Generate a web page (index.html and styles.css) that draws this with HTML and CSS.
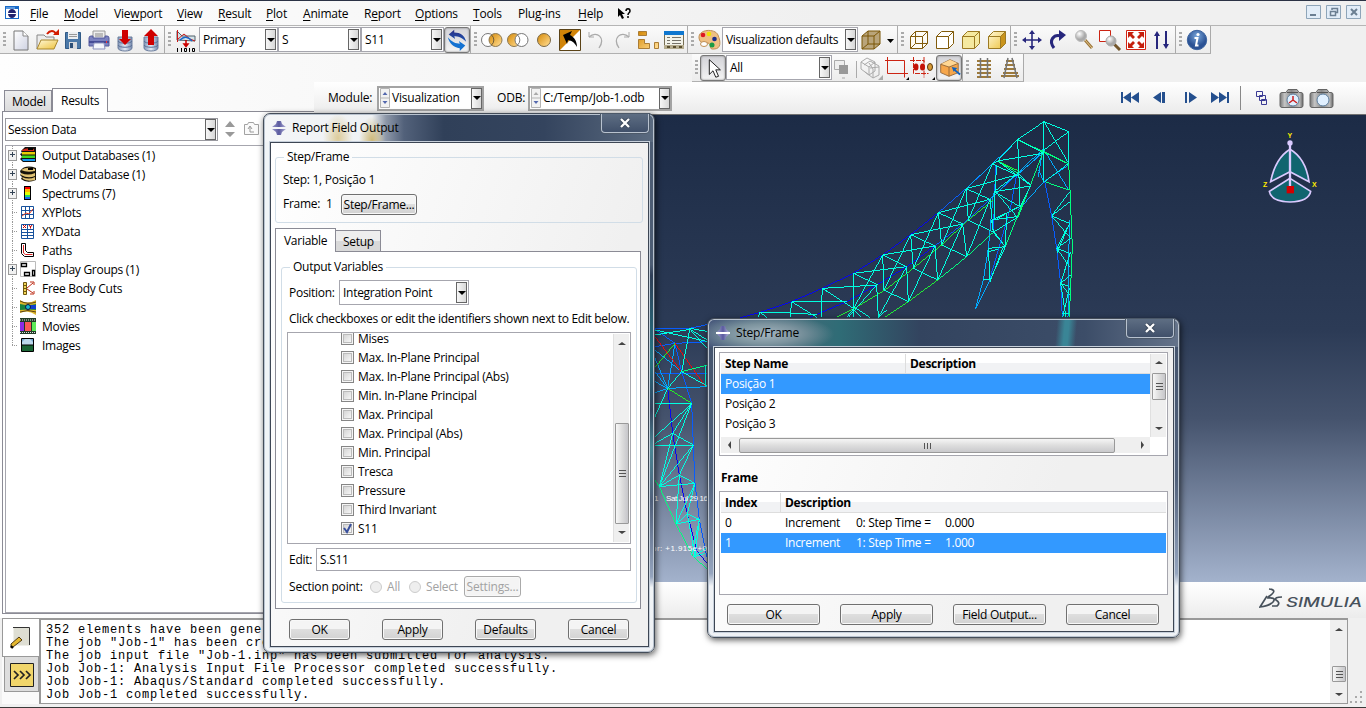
FILE: index.html
```html
<!DOCTYPE html>
<html lang="en">
<head>
<meta charset="utf-8">
<title>Report Field Output</title>
<link rel="stylesheet" href="styles.css">
</head>
<body>
<svg class="defs" width="0" height="0">
  <defs>
    <linearGradient id="gold" x1="0" y1="0" x2="1" y2="1"><stop offset="0" stop-color="#d48806"/><stop offset=".9" stop-color="#ffd98a"/></linearGradient>
    <linearGradient id="steel" x1="0" x2="1"><stop offset="0" stop-color="#8296b8"/><stop offset=".5" stop-color="#e4ebf5"/><stop offset="1" stop-color="#7388ad"/></linearGradient>
    <linearGradient id="pale" x1="0" y1="0" x2="1" y2="1"><stop offset="0" stop-color="#fff8d8"/><stop offset="1" stop-color="#edc23c"/></linearGradient>
    <linearGradient id="page" x1="0" y1="0" x2="1" y2="1"><stop offset="0" stop-color="#fff"/><stop offset="1" stop-color="#cfd2e2"/></linearGradient>
    <linearGradient id="sky" x1="0" y1="0" x2="0" y2="1"><stop offset="0" stop-color="#2c2f86"/><stop offset="1" stop-color="#1d55b0"/></linearGradient>
    <linearGradient id="abq" x1="0" x2="1"><stop offset="0" stop-color="#9a9acb"/><stop offset=".5" stop-color="#5a5a9f"/><stop offset="1" stop-color="#b0b0d8"/></linearGradient>
    <linearGradient id="cam" x1="0" x2="1"><stop offset="0" stop-color="#777"/><stop offset=".2" stop-color="#c4c4c4"/><stop offset=".5" stop-color="#8b8b8b"/><stop offset=".85" stop-color="#bbb"/><stop offset="1" stop-color="#666"/></linearGradient>
    <radialGradient id="lens" cx=".35" cy=".3"><stop offset="0" stop-color="#fff"/><stop offset="1" stop-color="#a9a9a9"/></radialGradient>
    <radialGradient id="info" cx=".5" cy=".3"><stop offset="0" stop-color="#79a6da"/><stop offset="1" stop-color="#2b5294"/></radialGradient>
    <g id="camera"><path d="M1 5.500q0-2 2-2h4l2-3h9l2 3h2q2 0 2 2v11q0 2-2 2H3q-2 0-2-2z" fill="url(#cam)" stroke="#666"/><path d="M8 3.500h11" stroke="#555"/><circle cx="14" cy="11" r="6" fill="#e1f0ff" stroke="#5d7f9f"/></g>
  </defs>
</svg>
<div class="app">
  <nav class="menubar">
    <svg class="appicon" width="14" height="13"><path d="M0 0h14v13H0z" fill="#1769c8"/><path d="M1 3h12v9H1z" fill="#fff"/><path d="M1 2h9" stroke="#9ec8f4"/><path d="M3 7c0-2 2-4 4-4s4 2 4 4z M3 8c0 2 2 4 4 4s4-2 4-4z" fill="#23236f"/></svg>
    <span class="m m1"><u>F</u>ile</span><span class="m m2"><u>M</u>odel</span><span class="m m3">Vie<u>w</u>port</span><span class="m m4"><u>V</u>iew</span><span class="m m5"><u>R</u>esult</span><span class="m m6"><u>P</u>lot</span><span class="m m7"><u>A</u>nimate</span><span class="m m8">R<u>e</u>port</span><span class="m m9"><u>O</u>ptions</span><span class="m m10"><u>T</u>ools</span><span class="m m11">Plu<u>g</u>-ins</span><span class="m m12"><u>H</u>elp</span>
    <svg class="m13" width="14" height="14"><path d="M0 1v9l2-2 2 4 2-1-2-4h3z" fill="#000"/><path d="M8 4c0-3 4-3 4 0 0 2-2 1.500-2 4M9 10h2" stroke="#000" stroke-width="1.500" fill="none"/></svg>
    <div class="winbtns">
      <svg width="15" height="14"><path d="M.5.500h14v13H.5z" fill="#e2edf8" stroke="#8ea5b9"/><path d="M4 10h6" stroke="#6b7f92" stroke-width="2"/></svg>
      <svg width="15" height="14"><path d="M.5.500h14v13H.5z" fill="#e2edf8" stroke="#8ea5b9"/><path d="M6 5V3.500h5.500v4H10M4.500 6.500h5v4h-5z" fill="none" stroke="#6b7f92" stroke-width="1.500"/></svg>
      <svg width="15" height="14"><path d="M.5.500h14v13H.5z" fill="#e2edf8" stroke="#8ea5b9"/><path d="M5 4l6 6M11 4l-6 6" stroke="#6b7f92" stroke-width="2"/></svg>
    </div>
  </nav>

  <div class="toolrow">
    <div class="tools">
      <i class="grip"></i>
      <svg class="ic" viewBox="0 0 26 26"><path d="M6 4h9l5 5v14H6z" fill="url(#page)" stroke="#777"/><path d="M15 4v5h5" fill="#fff" stroke="#888"/></svg>
      <svg class="ic" viewBox="0 0 26 26"><path d="M3 22V8h7l2 2h8v4" fill="#ececec" stroke="#888"/><path d="M3 22l4-9h17l-4 9z" fill="url(#pale)" stroke="#a8862c"/><path d="M13 7c3-4 7-4 9 0" stroke="#d31b00" stroke-width="2" fill="none"/><path d="M19 8h6V2z" fill="#d31b00"/></svg>
      <svg class="ic" viewBox="0 0 26 26"><path d="M5.500 5.500h15v16h-15z" fill="#4a78a8" stroke="#315a86"/><path d="M8 5h10v7H8z" fill="#eceff2"/><path d="M9 7.500h8M9 9.500h8" stroke="#999"/><path d="M9 15h8v7H9z" fill="#d6d9dd"/><path d="M10 16h3v5h-3z" fill="#2c4f77"/></svg>
      <svg class="ic" viewBox="0 0 26 26"><path d="M7 4h12v8H7z" fill="#eee" stroke="#999"/><path d="M9 7h8M9 9h8" stroke="#888"/><path d="M3 11q0-2 2-2h2v2h12V9h2q2 0 2 2v8H3z" fill="#7b82c0" stroke="#555b9c"/><path d="M3 14h20v2H3z" fill="#454c96"/><path d="M8 16h10l1 6H7z" fill="#f4f6fb" stroke="#8b91bd"/><path d="M20 15h1" stroke="#f33" stroke-width="2"/></svg>
      <svg class="ic" viewBox="0 0 26 26"><path d="M6 10v11c0 4 14 4 14 0V10z" fill="url(#steel)" stroke="#6c7e9e"/><path d="M6 14c1 3 13 3 14 0M6 18c1 3 13 3 14 0" stroke="#5c7096" fill="none"/><path d="M10 3h6v9h3l-6 6-6-6h3z" fill="#cf0000"/></svg>
      <svg class="ic" viewBox="0 0 26 26"><path d="M6 10v11c0 4 14 4 14 0V10z" fill="url(#steel)" stroke="#6c7e9e"/><path d="M6 14c1 3 13 3 14 0M6 18c1 3 13 3 14 0" stroke="#5c7096" fill="none"/><path d="M10 18h6V9h4l-7-7-7 7h4z" fill="#cf0000"/></svg>
    </div>
    <div class="tools">
      <i class="grip"></i>
      <svg class="ic" viewBox="0 0 26 26"><path d="M4 4l5 5h13v5L4 13z" fill="#d3e3e9" stroke="#52616b"/><path d="M4.500 3v12M5 12l6-5 6 5 5 2" stroke="#cc1717" fill="none"/><path d="M7 13q6-6 12 1" stroke="#1767ca" stroke-width="1.500" fill="none"/><path d="M13 13v5M11 17l2 2.500 2-2.500z" stroke="#c00" stroke-width="1.500" fill="#c00"/><path d="M4.500 21v4M8.500 21v4M16.500 21v4M11.500 21.500h2v3h-2zM19.500 21.500h2v3h-2z" stroke="#000" fill="none"/></svg>
      <div class="combo w79"><span>Primary</span><b></b></div>
      <div class="combo w83"><span>S</span><b></b></div>
      <div class="combo w83"><span>S11</span><b></b></div>
      <svg class="ic on" viewBox="0 0 26 26"><path d="M3 10c4 5 9 7 13 7l-1-3 7 5-6 6v-3C9 21 5 17 3 10z" fill="#1472d2"/><path d="M23 15C18 10 14 9 10 9l1 3-7-5 6-5v3c7 0 11 3 13 10z" fill="url(#sky)"/></svg>
    </div>
    <div class="tools">
      <i class="grip"></i>
      <svg class="ic" viewBox="0 0 26 26"><circle cx="9" cy="13" r="6.500" fill="#fff" stroke="#777"/><circle cx="16.500" cy="13" r="6.500" fill="url(#gold)" stroke="#8d7850"/><path d="M12.500 8a6.500 6.500 0 0 1 0 10" stroke="#6d5a36" fill="none"/></svg>
      <svg class="ic" viewBox="0 0 26 26"><circle cx="9" cy="13" r="6.500" fill="url(#gold)" stroke="#8d7850"/><circle cx="16.500" cy="13" r="6.500" fill="#fff" stroke="#777"/><path d="M12.500 8a6.500 6.500 0 0 1 0 10" stroke="#777" fill="none"/></svg>
      <svg class="ic" viewBox="0 0 26 26"><circle cx="13" cy="13" r="6.500" fill="url(#gold)" stroke="#7a6846"/></svg>
      <svg class="ic" viewBox="0 0 26 26"><path d="M2.500 2.500h21v21h-21z" fill="#fff" stroke="#5b4317"/><path d="M3 23V3h20z" fill="#d18408"/><path d="M6 8l9-4-2 4c4 2 7 6 7 12-3-5-5-6-9-7l-1 4z" fill="#000"/></svg>
      <svg class="ic" viewBox="0 0 26 26"><path d="M6 10c8-7 17 1 10 11" stroke="#aaa" stroke-width="1.300" fill="none"/><path d="M6 5v5h5" stroke="#aaa" fill="none"/></svg>
      <svg class="ic" viewBox="0 0 26 26"><path d="M20 10C12 3 3 11 10 21" stroke="#aaa" stroke-width="1.300" fill="none"/><path d="M20 5v5h-5" stroke="#aaa" fill="none"/></svg>
      <svg class="ic" viewBox="0 0 26 26"><path d="M3.500 4.500h8v4h-8zM3.500 12.500h6v4h5v5h-11zM19.500 15.500h4v6h-4z" fill="url(#gold)" stroke="#ab7d35"/></svg>
      <svg class="ic" viewBox="0 0 26 26"><path d="M3.500 4.500h19v17h-19z" fill="#f3f3ea" stroke="#776f55"/><path d="M3 4h20v4H3z" fill="#0f77cf"/><path d="M3 18h20v4H3z" fill="#b5ac8e"/><path d="M6 10.500h3M11 10.500h9M6 13.500h3M11 13.500h9M6 16.500h3M11 16.500h9" stroke="#77746a"/><path d="M6 20h3M12 20h3M18 20h3" stroke="#5b5030" stroke-width="2"/></svg>
    </div>
    <div class="tools">
      <i class="grip"></i>
      <svg class="ic" viewBox="0 0 26 26"><path d="M3 11C2 2 19 1 22 8s3 14-4 14c-6 1-2-5-6-6-3-1-8 2-9-5z" fill="#efbf83" stroke="#c08f55"/><circle cx="7" cy="8" r="2.300" fill="#df1720"/><circle cx="13" cy="7" r="2.300" fill="#efe300"/><circle cx="18.500" cy="12" r="2.300" fill="#1b2d8b"/><circle cx="16" cy="18" r="2.500" fill="#1a9b45"/><ellipse cx="8" cy="17" rx="3.500" ry="2.500" fill="#fff" stroke="#c08f55"/></svg>
      <div class="combo w136"><span>Visualization defaults</span><b></b></div>
      <svg class="ic" viewBox="0 0 26 26"><path d="M4 9l6-5h12v13l-6 5H4z" fill="#b9a47a" stroke="#7b5607"/><path d="M4 9h12v13M16 9l6-5M10 4v13h12M10 17l-6 5" stroke="#7b5607" fill="none"/></svg>
      <svg width="13" height="26"><path d="M3 12h7l-3.500 4z"/></svg>
    </div>
    <div class="tools">
      <i class="grip"></i>
      <svg class="ic" viewBox="0 0 26 26"><path d="M4.500 9.500l5-5h12v12l-5 5h-12zM4.500 9.500h12v12M16.500 9.500l5-5M9.500 4.500v12h12M9.500 16.500l-5 5" stroke="#825c0c" fill="#fffdf5"/></svg>
      <svg class="ic" viewBox="0 0 26 26"><path d="M4.500 9.500l5-5h12v12l-5 5h-12zM4.500 9.500h12v12M16.500 9.500l5-5" stroke="#825c0c" fill="#fff"/></svg>
      <svg class="ic" viewBox="0 0 26 26"><path d="M4.500 9.500l5-5h12v12l-5 5h-12zM4.500 9.500h12v12M16.500 9.500l5-5" stroke="#9c7a23" fill="#f5e9a0"/></svg>
      <svg class="ic" viewBox="0 0 26 26"><path d="M4.500 9.500l5-5h12v12l-5 5h-12z" fill="url(#pale)"/><path d="M16.500 9.500l5-5v12l-5 5z" fill="#c9941c"/><path d="M4.500 9.500l5-5h12v12l-5 5h-12zM4.500 9.500h12v12M16.500 9.500l5-5" stroke="#9c7a23" fill="none"/></svg>
    </div>
    <div class="tools">
      <i class="grip"></i>
      <svg class="ic" viewBox="0 0 26 26"><path d="M13 5v16M5 13h16" stroke="#27277d" stroke-width="1.600"/><path d="M10 7l3-4 3 4zM10 19l3 4 3-4zM7 10l-4 3 4 3zM19 10l4 3-4 3z" fill="#27277d"/></svg>
      <svg class="ic" viewBox="0 0 26 26"><path d="M9 21C3 13 9 7 16 9" stroke="#27277d" stroke-width="3" fill="none"/><path d="M14 3l7 5-7 6z" fill="#27277d"/></svg>
      <svg class="ic" viewBox="0 0 26 26"><path d="M14 13l7 8" stroke="#9a7438" stroke-width="3"/><path d="M14 13l7 8" stroke="#e5ca90"/><circle cx="10" cy="9" r="5.500" fill="url(#lens)" stroke="#bbb"/></svg>
      <svg class="ic" viewBox="0 0 26 26"><path d="M2.500 3.500h11v11h-11z" fill="#fff" stroke="#cc2413"/><path d="M17 17l6 6" stroke="#73562b" stroke-width="3"/><circle cx="14" cy="14" r="5" fill="url(#lens)" stroke="#aaa"/></svg>
      <svg class="ic" viewBox="0 0 26 26"><path d="M3.500 3.500h19v19h-19z" fill="#fff" stroke="#d32414"/><path d="M5 5h6L9 7l3 3-2 2-3-3-2 2zM21 5v6l-2-2-3 3-2-2 3-3-2-2zM5 21v-6l2 2 3-3 2 2-3 3 2 2zM21 21h-6l2-2-3-3 2-2 3 3 2-2z" fill="#c5200d"/></svg>
      <svg class="ic" viewBox="0 0 26 26"><path d="M8 8v14M17 4v14" stroke="#27277d" stroke-width="2"/><path d="M5 9l3-5 3 5zM14 17l3 5 3-5z" fill="#27277d"/></svg>
    </div>
    <div class="tools">
      <i class="grip"></i>
      <svg class="ic" viewBox="0 0 26 26"><circle cx="13" cy="13" r="9.700" fill="url(#info)" stroke="#3c64a0"/><circle cx="14" cy="7.500" r="1.600" fill="#fff"/><path d="M10.500 11h3l-1.500 7.500h2.500" stroke="#fff" stroke-width="2" fill="none"/></svg>
    </div>
  </div>

  <div class="toolrow second">
    <div class="tools">
      <i class="grip"></i>
      <svg class="ic on" viewBox="0 0 26 26"><path d="M9 4v16l4-4 3 7 3-1-3-7h5z" fill="#fff" stroke="#111"/></svg>
      <div class="combo w106"><span>All</span><b></b></div>
      <svg width="22" height="26"><path d="M2.500 5.500h10v9h-10z" fill="#eee" stroke="#aaa"/><path d="M7 10h9v9H7z" fill="#999"/><path d="M10 23h3" stroke="#aaa"/></svg>
      <i class="tsep"></i>
      <svg class="ic" viewBox="0 0 26 26"><path d="M3 7l6-4 8 4v9l-6 4-8-6zM3 7l8 5v8M11 12l6-5M6 10l6-4 9 5v9l-6 3-8-6M12 13l9-1M15 14v9M11 8l4 6" stroke="#aaa" fill="none"/><path d="M20 25h5v-5z" fill="#aaa"/></svg>
      <svg class="ic" viewBox="0 0 26 26"><path d="M1 5.500h19.500v17M3.500 2v16.500H24" stroke="#cc2413" fill="none"/><path d="M22 25h3v-3z"/></svg>
      <svg class="ic" viewBox="0 0 26 26"><path d="M0 5.500h14v17M3.500 2v16.500h15M14 2v5" stroke="#cc2413" fill="none" stroke-dasharray="5 1"/><ellipse cx="6" cy="12" rx="2.500" ry="3.500" fill="#c31308"/><ellipse cx="12.500" cy="12" rx="2.500" ry="3.500" fill="#c31308"/><ellipse cx="20" cy="12" rx="2.500" ry="3.500" fill="#d89b36" stroke="#59380b"/><path d="M22 25h3v-3z"/></svg>
      <svg class="ic on" viewBox="0 0 26 26"><path d="M4 9l10-5 9 4v10l-10 4-9-4z" fill="#f6a64a" stroke="#95683a"/><path d="M4 9l10-5 9 4-10 4z" fill="#ffd793"/><path d="M4 9l9 3v10M13 12l10-4" stroke="#95683a" fill="none"/><path d="M25 20l-6-5" stroke="#1162bd" stroke-width="2"/><path d="M16 12l6 1-4 4z" fill="#1162bd"/></svg>
    </div>
    <div class="tools">
      <i class="grip"></i>
      <svg class="ic" viewBox="0 0 26 26"><path d="M6 6h14M6 10h14M6 14h14M6 18h14M6 22h14" stroke="#9d7a3c" stroke-width="2"/><path d="M9.500 3v20M16.500 3v20" stroke="#757575" stroke-width="1.500"/></svg>
      <svg class="ic" viewBox="0 0 26 26"><path d="M9 6h8M8 10h10M7 14h12M6 18h15M4 21h18" stroke="#9d7a3c" stroke-width="2"/><path d="M11 3L7 23M15 3l5 20" stroke="#757575" stroke-width="1.500"/></svg>
    </div>
  </div>

  <div class="work">
    <aside class="left">
      <div class="ltabs"><div class="ltab">Model</div><div class="ltab sel">Results</div></div>
      <div class="lpanel">
        <div class="lhead">
          <div class="combo session"><span>Session Data</span><b></b></div>
          <svg width="50" height="24"><path d="M7 9l5-6 5 6zM7 14h10l-5 5z" fill="#999"/><path d="M26.500 16.500v-10h3l1-2h5l1 2h4v10z" fill="#fafafa" stroke="#a2a2a2"/><path d="M36 14h-4V9M30 11l2-3 2 3" stroke="#999" fill="none"/></svg>
        </div>
        <div class="tree">
          <div class="node"><i class="ex"></i><svg width="16" height="17"><path d="M1 4l4-4h11v15H3l-3-3 2-2-2-3 2-1z" fill="#111"/><path d="M2 3q5-3 12-1v2H2z" fill="#cf2519"/><path d="M2 5h13v2.500H2z" fill="#e6ce05"/><path d="M2 8.500h13v2.500H2z" fill="#42d91b"/><path d="M2 12h13v2H3z" fill="#1595ef"/><path d="M8 2h5" stroke="#000" stroke-width="2"/></svg><span>Output Databases (1)</span></div>
          <div class="node"><i class="ex"></i><svg width="16" height="17"><path d="M0 5Q5-2 16 2v12q-9 4-15-1l1-2-2-2 1-1z" fill="#15120a"/><path d="M1 4q6-4 14-1v2q-8 2-14-1zM1 7q7 3 14 0v3q-7 3-14-1zM2 11q7 3 13 0v3q-7 2-12-1z" fill="#e0c273"/><path d="M8 3h5" stroke="#000" stroke-width="2"/></svg><span>Model Database (1)</span></div>
          <div class="node"><i class="ex"></i><svg width="16" height="17"><path d="M4 1h7v14H4z" fill="#000"/><path d="M5 2h5v2H5z" fill="red"/><path d="M5 4h5v3H5z" fill="#ffb300"/><path d="M5 7h5v3H5z" fill="#dfff00"/><path d="M5 10h5v2H5z" fill="#22d46d"/><path d="M5 12h5v2H5z" fill="#1769ed"/></svg><span>Spectrums (7)</span></div>
          <div class="node"><i></i><svg width="16" height="17"><path d="M1.500 2.500h12v12h-12zM5.500 2v12M9.500 2v12M1 6.500h12M1 10.500h12" fill="#fff" stroke="#17529d"/><path d="M2 12l4-3 3 1 4-5" stroke="#e2391c" fill="none"/></svg><span>XYPlots</span></div>
          <div class="node"><i></i><svg width="16" height="17"><path d="M1.500 1.500h12v14h-12zM7.500 1v14M1 6.500h12M1 9.500h12M1 12.500h12" fill="#fff" stroke="#17529d"/><path d="M3 2l3 3M6 2L3 5M9 2l1.500 2L12 2M10.500 3.500v2" stroke="#c00" fill="none"/></svg><span>XYData</span></div>
          <div class="node"><i></i><svg width="16" height="17"><path d="M1.500 1.500h4v7l2 2h6v4h-9l-3-3z" fill="#fff" stroke="#000"/><path d="M3.500 3v8l2 1.500h7" stroke="#d22" fill="none"/></svg><span>Paths</span></div>
          <div class="node"><i class="ex"></i><svg width="16" height="17"><path d="M.5.500h15v15H.5z" fill="#fff" stroke="#bbb"/><path d="M1.500 2.500h5v3h-5zM4.500 11.500h5v3h-5zM12.500 9.500h2v5h-2z" fill="#fff" stroke="#000" stroke-width="1.300"/></svg><span>Display Groups (1)</span></div>
          <div class="node"><i></i><svg width="16" height="17"><path d="M3.500 2.500h3v12h-3zM3 5.500h3M3 8.500h3M3 11.500h3" fill="#f3d656" stroke="#6f5811"/><path d="M7 8l6-5M7 9l6 4M10 2h4v3M10 14h4v-3" stroke="#bd2c17" fill="none"/></svg><span>Free Body Cuts</span></div>
          <div class="node"><i></i><svg width="16" height="17"><path d="M0 1q7 5 16 0v15q-8-6-16-2z" fill="#dcb52b"/><path d="M0 5q8 2 16 0v6q-8-1-16 0z" fill="#178440"/><path d="M0 2q8 4 16 1M0 13q8-3 16 0" stroke="#5b4216" fill="none"/><path d="M9 6h7v4H9z" fill="#1240cd"/><circle cx="8" cy="8" r="2.500" fill="#12b5d0" stroke="#114"/></svg><span>Streams</span></div>
          <div class="node"><i></i><svg width="16" height="17"><path d="M0 0h16v16H0z" fill="#203b27"/><path d="M0 4h4v9H0z" fill="#8c2be5"/><path d="M5 4h6v9H5z" fill="#fa5757"/><path d="M12 4h4v9h-4z" fill="#5ee958"/><path d="M0 2h16M0 14.500h16" stroke="#ddd" stroke-dasharray="1 1"/></svg><span>Movies</span></div>
          <div class="node last"><i></i><svg width="16" height="17"><path d="M1.500 1.500h12v13h-12z" fill="#6fa5cd" stroke="#000"/><path d="M2 5l3-3h5l3 3v3H2z" fill="#bcd8eb"/><path d="M2 8h11v6H2z" fill="#1a6535"/><path d="M1 8h13" stroke="#000"/></svg><span>Images</span></div>
        </div>
      </div>
    </aside>

    <main class="right">
      <div class="context">
        <span class="clab">Module:</span>
        <div class="combo ctx mod"><svg width="11" height="20"><path d="M.5.500h9v19h-9z" fill="#f2f2f2" stroke="#b4b4b4"/><path d="M1 10h9" stroke="#b4b4b4"/><path d="M2.500 7L5 4l2.500 3zM2.500 13h5L5 16z" fill="#5569ae"/></svg><span>Visualization</span><b></b></div>
        <span class="clab odbl">ODB:</span>
        <div class="combo ctx odb"><svg width="11" height="20"><path d="M.5.500h9v19h-9z" fill="#f2f2f2" stroke="#b4b4b4"/><path d="M1 10h9" stroke="#b4b4b4"/><path d="M2.500 7L5 4l2.500 3z" fill="#aaa"/><path d="M2.500 13h5L5 16z" fill="#5569ae"/></svg><span>C:/Temp/Job-1.odb</span><b></b></div>
        <svg class="play" width="216" height="24" viewBox="0 0 216 24"><g fill="#244f8e"><path d="M1 6h2v11H1zM11 6v11l-8-5.500zM19 6v11l-8-5.500zM41 6v11l-8-5.500zM42 6h3v11h-3zM65 6h2v11h-2zM69 6v11l8-5.500zM91 6v11l8-5.500zM99 6v11l8-5.500zM107 6h2v11h-2z"/></g><path d="M120.500-1v26" stroke="#888"/><path d="M136.500 5.500h6v5h-6zM139.500 9.500h6v5h-6zM141.500 13.500h5v5h-5z" fill="none" stroke="#3a3a94"/><use href="#camera" x="159" y="3"/><path d="M173 10v4M173 14l-4 3M173 14l4 3" stroke="#c22" stroke-width="1.500"/><use href="#camera" x="189" y="3"/></svg>
      </div>
      <div class="viewport">
        <svg width="1052" height="467" viewBox="314 115 1052 467">
          <g transform="translate(640 110) scale(.333333)" fill="none" stroke-width="3" shape-rendering="crispEdges">
            <path stroke="#0606ee" d="M295 625L360 607 455 575 547 535 640 490 728 435 812 374 895 308M510 622L620 575 710 525 800 470 885 408"/>
            <path stroke="#075cff" d="M895 308L978 236 1035 184M885 408L968 342 1050 268 1130 195M1214 215L1235 318 1250 415 1262 520 1267 622M1130 195L1112 290 1085 385 1050 505M1060 370L1067 165"/>
            <path stroke="#00aaff" d="M978 236L1057 162 1133 88M1050 268L1208 118M1130 195L1208 130M1135 300L1212 215 1286 165M1212 120L1286 240M1208 118L1195 200M1006 597L1030 510 1045 415 1060 250M1006 597L1050 510M1195 180L1212 215M1140 190L1212 120M1284 622L1288 330"/>
            <path stroke="#20ed35" d="M735 622L805 575 893 510M590 622L640 597 735 540 820 475 905 405 985 330 1060 270M1073 153L1140 185"/>
            <path stroke="#00ff7e" d="M893 510L980 440 1060 367 1135 320 1208 130M1133 90L1286 162M1133 90L1212 125 1286 162M1212 35V120M1286 65V160L1290 240 1297 410 1288 622M1214 215L1286 240M1160 250L1096 410 1050 510M1073 153L1135 190"/>
            <path stroke="#00ffe1" d="M1133 88L1212 35 1286 65M1212 35V215M1212 35L1286 160M1286 65L1212 120M1286 65V160L1214 215M1133 88L1073 153 1208 130M1133 88L1212 130M1133 88L1140 290M1057 162L1130 195 1172 225 1135 190M1073 153L1170 225M1070 165L1065 245 1172 228 1140 290 1062 245 1135 190M1067 245L1130 320 1055 330 1060 367 1135 320M1065 245V330M1135 290L1065 330M1096 410L1062 365M1055 330L1140 290M1096 410L1100 310M1045 415L1096 410 1060 367M1045 415L1050 510 1096 410M1030 510H1050L1045 415M1045 425L1075 418M1050 515L1090 410"/>
            <path stroke="#00ffe1" d="M355 622L360 607H451L451 622M360 607L380 622M455 575H620M455 575L530 622M452 610L530 613M455 575L450 622M547 535L710 525M547 535L543 622M547 535L640 595M640 490L800 470M640 490V622M640 490L715 525M710 525L715 622 800 470 805 575 885 408 893 510 968 342 980 440 1050 268 1060 367M710 525L625 622M555 540L600 570M728 435L885 408M728 435L732 540 805 575M728 435L800 470M640 597L728 435M732 540L812 374 820 475 893 510M812 374L968 342M812 374L885 408M820 475L895 308 905 405 980 440M895 308L1050 268M895 308L968 342M905 405L978 236 985 330 1060 367M978 236L1130 195M978 236L1050 268M985 330L1057 162M1057 162L1073 153M640 597L665 622M640 597L620 622M640 590L690 622M715 622L740 600"/>
            <path stroke="#00ffe1" d="M1289 245L1235 318 1289 340 1250 415 1292 385M1235 318L1290 275M1250 415L1289 470M1235 318L1292 385M1250 415L1290 430 1262 520 1292 495M1262 520L1289 555M1262 520L1288 530M1262 520L1278 622M1288 535L1268 622M1267 610H1288M1289 340L1250 430M1292 425L1262 520"/>
          </g>
          <g transform="translate(640 310) scale(.333333)" fill="none" stroke-width="3" shape-rendering="crispEdges">
            <path stroke="#075cff" d="M0 55H150L205 43M45 58L105 100M45 110L105 100 205 95M105 100L125 185 155 280 160 405 165 520 178 628 200 740M45 190H205"/>
            <path stroke="#0606ee" d="M105 100L83 235 98 370 118 495 142 612 170 722 205 765"/>
            <path stroke="#00aaff" d="M45 145L83 235M45 185L83 235 125 185M45 215L83 235 45 248M83 235L205 230M45 120L125 185M83 235L105 100"/>
            <path stroke="#ef0909" d="M45 80L75 120M75 120L125 185M105 100L195 228"/>
            <path stroke="#24ef24" d="M45 172L105 100M83 235L155 280"/>
            <path stroke="#00ff7e" d="M125 185L205 165M45 510L58 530 108 642 160 740 205 780"/>
            <path stroke="#00ffe1" d="M45 60L205 95M45 75L150 58 205 92M150 55L205 65M150 58L205 120M150 55L125 185 205 230M198 165V230M125 185L83 235 45 320M45 282H155L45 380M155 280L98 370 160 405 45 408M98 370L45 400M155 280L58 530 160 405 118 495 165 520 58 530 118 495M98 370L58 530M165 520L108 642 142 612 178 628 108 642M118 495L108 642M165 520L142 612M142 612L165 740 178 628 155 735M178 628L165 690M160 740L205 710M165 740L195 730"/>
          </g>
          <g class="vtext"><text x="654" y="501">1</text><text x="666" y="501" textLength="42">Sat Jul 29 16</text><text x="652" y="551" textLength="55">or: +1.915e+0</text></g>
          <g transform="translate(1020 0) scale(.333333)"><path d="M810 448Q766 475 752 545L810 515 867 545Q857 475 810 448zM810 535L872 574Q867 604 810 606 753 604 748 574z" fill="#10656f" stroke="#dacaff" stroke-width="5"/><path d="M810 430V570" stroke="#dacaff" stroke-width="7"/><circle cx="810" cy="429" r="8" fill="#dacaff"/><path d="M800 558h22v22h-22z" fill="#d20000"/></g>
          <g class="axis"><text x="1287.500" y="138">Y</text><text x="1263" y="187">Z</text><text x="1312" y="187">X</text></g>
        </svg>
      </div>
      <div class="brand"><svg width="106" height="24"><g fill="none" stroke="#47515b" stroke-width="1.700"><path d="M10 1Q20 2 9 9M8 10Q18 9 14 14 10 18 1 19L8 8M23 9Q15 9 17 12 22 15 18 18H13"/></g><text x="27" y="19" textLength="76" lengthAdjust="spacingAndGlyphs">SIMULIA</text></svg></div>
    </main>
  </div>

  <footer class="msgs">
    <div class="mtabs">
      <div class="mt sel"><svg width="24" height="26"><path d="M7.500 2.500h17v18h-17z" fill="#deded3"/><path d="M7 2.500h16.500v17.500" stroke="#333" fill="none"/><path d="M5 19l8-7 3 3-9 7-2 1z" fill="#e5b82f" stroke="#4d3812"/><path d="M5 21l2 2" stroke="#000" stroke-width="2"/></svg></div>
      <div class="mt"><svg width="24" height="24"><path d="M.5.500h23v23H.5z" fill="#f1d66b" stroke="#222"/><path d="M4 8l4 4-4 4M10 8l4 4-4 4M16 8l4 4-4 4" stroke="#222" stroke-width="1.700" fill="none"/></svg></div>
    </div>
    <pre class="log">352 elements have been gener
The job "Job-1" has been cre
The job input file "Job-1.inp" has been submitted for analysis.
Job Job-1: Analysis Input File Processor completed successfully.
Job Job-1: Abaqus/Standard completed successfully.
Job Job-1 completed successfully.</pre>
    <div class="vbar msgbar"><em class="up"></em><div class="thumb"></div><em class="down"></em></div>
    <svg class="sizegrip" width="17" height="20"><path d="M12 8h2v2h-2zM7 13h2v2H7zM12 13h2v2h-2zM2 18h2v2H2zM7 18h2v2H7zM12 18h2v2h-2z" fill="#aaa"/></svg>
  </footer>
</div>

<section class="dialog report">
  <header class="title"><svg width="14" height="14"><path d="M5 0h4l1 3h-6zM0 6l4-3h6l4 3zM0 8h14l-4 3H4zM4 11h6l-1 3H5z" fill="url(#abq)"/></svg><span>Report Field Output</span><div class="close"><svg width="12" height="10"><path d="M2 1l8 8M10 1L2 9" stroke="#39475a" stroke-width="4"/><path d="M2 1l8 8M10 1L2 9" stroke="#fff" stroke-width="2.300"/></svg></div></header>
  <div class="client">
    <fieldset class="stepbox"><legend>Step/Frame</legend>
      <div class="line">Step: 1, Posição 1</div>
      <div class="line frame"><span>Frame:</span><span>1</span><button class="btn b76">Step/Frame...</button></div>
    </fieldset>
    <div class="dtabs"><div class="dtab sel">Variable</div><div class="dtab">Setup</div></div>
    <div class="dpanel">
      <fieldset class="outbox"><legend>Output Variables</legend>
        <div class="posrow"><span>Position:</span><div class="combo pos"><span>Integration Point</span><b></b></div></div>
        <div class="hint">Click checkboxes or edit the identifiers shown next to Edit below.</div>
        <div class="list">
          <div class="checks">
            <label><i></i>Mises</label><label><i></i>Max. In-Plane Principal</label><label><i></i>Max. In-Plane Principal (Abs)</label><label><i></i>Min. In-Plane Principal</label><label><i></i>Max. Principal</label><label><i></i>Max. Principal (Abs)</label><label><i></i>Min. Principal</label><label><i></i>Tresca</label><label><i></i>Pressure</label><label><i></i>Third Invariant</label><label><i class="ck"><svg width="11" height="11"><path d="M2 5l3 4 4-8" stroke="#384f9c" stroke-width="2" fill="none"/></svg></i>S11</label>
          </div>
          <div class="vbar listbar"><em class="up"></em><div class="thumb"></div><em class="down"></em></div>
        </div>
        <div class="edit"><span>Edit:</span><div class="input">S.S11</div></div>
        <div class="sect"><span class="sp">Section point:</span><i></i><span class="all">All</span><i></i><span class="sel">Select</span><button class="btn dis">Settings...</button></div>
      </fieldset>
    </div>
    <div class="dbtns"><button class="btn">OK</button><button class="btn">Apply</button><button class="btn">Defaults</button><button class="btn">Cancel</button></div>
  </div>
</section>

<section class="dialog step">
  <header class="title"><svg width="14" height="14"><path d="M5 0h4l1 3h-6zM1 6l3-3h6l3 3zM1 8h12l-3 3H4zM4 11h6l-1 3H5z" fill="url(#abq)"/><path d="M0 7h14" stroke="#fff" stroke-width="2"/></svg><span>Step/Frame</span><div class="close"><svg width="12" height="10"><path d="M2 1l8 8M10 1L2 9" stroke="#39475a" stroke-width="4"/><path d="M2 1l8 8M10 1L2 9" stroke="#fff" stroke-width="2.300"/></svg></div></header>
  <div class="client">
    <div class="table steps">
      <div class="trows">
        <div class="th"><span class="c185">Step Name</span><span>Description</span></div>
        <div class="tr selrow">Posição 1</div><div class="tr">Posição 2</div><div class="tr">Posição 3</div>
        <div class="hbar"><em class="lt"></em><div class="hthumb"></div><em class="rt"></em></div>
      </div>
      <div class="vbar stepbar"><em class="up"></em><div class="thumb"></div><em class="down"></em></div>
    </div>
    <div class="flabel">Frame</div>
    <div class="table frames">
      <div class="th"><span class="c60">Index</span><span>Description</span></div>
      <div class="tr cols"><span>0</span><span>Increment</span><span>0: Step Time =</span><span>0.000</span></div>
      <div class="tr cols selrow"><span>1</span><span>Increment</span><span>1: Step Time =</span><span>1.000</span></div>
    </div>
    <div class="sbtns"><button class="btn">OK</button><button class="btn">Apply</button><button class="btn">Field Output...</button><button class="btn">Cancel</button></div>
  </div>
</section>
</body>
</html>
```

FILE: styles.css
```css
* { box-sizing: border-box; }
body { margin: 0; width: 1366px; height: 708px; overflow: hidden; position: relative; font: 12px/16px "Open Sans", "Noto Sans", sans-serif; letter-spacing: -.28px; color: #000; background: #f0f0f0; white-space: nowrap; }
svg { display: block; flex: none; }
.defs { position: absolute; }
.app { display: flex; flex-direction: column; height: 708px; border-top: 1px solid #2b3245; border-bottom: 1px solid #3a3a3a; background: linear-gradient(90deg, #fefefe, #f0f0f0 60%); }

.menubar { display: flex; align-items: center; height: 25px; border-bottom: 1px solid #b5b5b5; padding-top: 1px; letter-spacing: -.2px; }
.appicon { margin: 0 11px 3px 5px; }
.m1 { width: 34px; } .m2 { width: 50px; } .m3 { width: 63px; } .m4 { width: 41px; } .m5 { width: 48px; } .m6 { width: 37px; } .m7 { width: 61px; } .m8 { width: 51px; } .m9 { width: 58px; } .m10 { width: 45px; } .m11 { width: 60px; } .m12 { width: 40px; }
.m { flex: none; }
u { text-underline-offset: 2px; }
.winbtns { display: flex; gap: 5px; margin: -3px 0 0 auto; padding-right: 5px; }

.toolrow { display: flex; height: 28px; }
.toolrow.second { padding-left: 692px; }
.tools { display: flex; align-items: center; border-right: 1px solid #aaa; border-bottom: 1px solid #b0b0b0; height: 28px; background: linear-gradient(#fbfbfb, #ececec); }
.grip { width: 3px; height: 15px; margin: 0 2px 0 3px; background: repeating-linear-gradient(#aaa 0 2px, transparent 2px 4px); flex: none; }
.ic { width: 26px; height: 26px; }
.ic.on { border: 1px solid #777; border-radius: 3px; background: linear-gradient(#d3d3d8, #f4f4f4); box-shadow: inset 0 0 2px #777; }
.tsep { width: 1px; height: 17px; margin: 4px 1px 0 2px; background: #aaa; }
.combo { display: flex; align-items: center; height: 25px; border: 1px solid #a6a6ae; background: #fff; padding-left: 3px; flex: none; overflow: hidden; }
.combo b { width: 11px; height: 21px; margin: 0 1px 0 auto; border: 1px solid #666; background: linear-gradient(90deg, #f7f7f7, #d8d8d8); display: flex; align-items: center; justify-content: center; flex: none; }
.combo b::after { content: ""; border: 4px solid transparent; border-top-color: #000; border-bottom: 0; flex: none; }
.w79 { width: 79px; } .w83 { width: 83px; } .w106 { width: 106px; } .w136 { width: 136px; }

.work { display: flex; height: 536px; }
.left { width: 314px; padding: 6px 0 4px 2px; flex: none; }
.ltabs { display: flex; align-items: flex-end; height: 23px; }
.ltab { width: 48px; height: 21px; margin-left: 2px; padding: 3px 0 0 7px; border: 1px solid #8b8b95; border-bottom: 0; background: linear-gradient(#eee, #dcdcdc); }
.ltab.sel { width: 56px; height: 24px; margin: 0 0 -1px; padding: 4px 0 0 8px; background: #fff; position: relative; z-index: 1; }
.lpanel { height: 503px; border: 1px solid #8b8b95; border-right: 0; padding: 6px 0 0 2px; background: #fff; display: flex; flex-direction: column; }
.lhead { display: flex; height: 27px; }
.session { width: 213px; height: 23px; padding-left: 2px; border-color: #99999f; }
.tree { flex: 1; border: 1px solid #a6a6ae; border-right: 0; }
.node { display: flex; align-items: center; height: 19px; padding-left: 2px; }
.node i { width: 9px; height: 19px; margin-right: 3px; background: repeating-linear-gradient(#999 0 1px, transparent 1px 2px) 4px 0/1px 100% no-repeat, repeating-linear-gradient(90deg, #999 0 1px, transparent 1px 2px) 4px 9px/6px 1px no-repeat; display: flex; align-items: center; }
.node.last i { background-size: 1px 10px, 6px 1px; }
.node .ex::after { content: ""; width: 9px; height: 9px; border: 1px solid #999; background: linear-gradient(#345, #345) 1px 3px/5px 1px no-repeat, linear-gradient(#345, #345) 3px 1px/1px 5px no-repeat, #f1f1f1; }
.node svg { margin-right: 6px; }

.right { flex: 1; display: flex; flex-direction: column; }
.context { display: flex; align-items: center; height: 33px; padding-left: 14px; background: linear-gradient(#fff, #ebebeb); border-bottom: 1px solid #707070; letter-spacing: -.2px; }
.clab { width: 49px; }
.odbl { width: 31px; margin-left: 13px; }
.ctx { border: 2px solid #a3a3a3; padding-left: 1px; }
.ctx b { margin-right: 0; }
.ctx svg { margin-right: 1px; }
.mod { width: 107px; } .odb { width: 144px; }
.play { margin-left: 448px; }
.viewport { height: 467px; background: linear-gradient(#1c2b46 0, #2c3b56 46%, #45536d 65%, #a3b2cc 100%); overflow: hidden; }
.vtext { font: 8px "Liberation Sans", sans-serif; fill: #fff; letter-spacing: 0; }
.axis { font: bold 7px "Liberation Sans", sans-serif; fill: #ffec00; letter-spacing: 0; }
.brand { flex: 1; background: linear-gradient(#fff, #ececec); padding: 6px 0 0 945px; }
.brand text { font: italic 500 13px Inter, sans-serif; fill: #47515b; letter-spacing: 0; }

.msgs { flex: 1; display: flex; padding-bottom: 3px; background: #f0f0f0; }
.mtabs { width: 38px; margin-left: 2px; border-right: 1px solid #999; background: #fafafa; }
.mt { height: 35px; margin-left: 2px; padding: 6px 5px; border: 1px solid #999; border-top: 0; background: #ddd; }
.mt.sel { height: 39px; margin-left: 0; border: 1px solid #999; border-right: 0; background: #fff; padding: 6px 3px; }
.log { margin: 0; width: 1290px; border: 1px solid #999; border-width: 2px 0 1px 1px; padding: 4px 0 0 5px; background: #fff; font: 12px/13px "Liberation Mono", monospace; letter-spacing: .8px; }
.vbar { display: flex; flex-direction: column; align-items: center; width: 16px; background: #efefef; border-left: 1px solid #e0e0e0; flex: none; }
.vbar em, .hbar em { width: 0; height: 0; border: 4px solid transparent; flex: none; }
.vbar .up { border-bottom-color: #444; border-bottom-width: 3px; border-top: 0; }
.vbar .down { border-top-color: #444; border-top-width: 3px; border-bottom: 0; margin-top: auto; }
.thumb { width: 14px; border: 1px solid #999; border-radius: 1px; background: linear-gradient(#555, #555) 3px calc(50% - 3px)/7px 1px no-repeat, linear-gradient(#555, #555) 3px 50%/7px 1px no-repeat, linear-gradient(#555, #555) 3px calc(50% + 3px)/7px 1px no-repeat, linear-gradient(90deg, #f7f7f7, #ddd 50%, #c6c6ca); flex: none; }
.msgbar { width: 18px; border: 1px solid #999; border-width: 2px 1px 1px 0; padding: 8px 0 7px; }
.msgbar .thumb { height: 16px; margin-top: 35px; }
.sizegrip { margin-top: 65px; }

.dialog { position: absolute; border: 1px solid #444d59; border-radius: 7px; box-shadow: 1px 2px 6px rgba(0, 0, 0, .65), inset 0 0 0 1px #b9c3cf; padding: 0 5px 5px 6px; display: flex; flex-direction: column; }
.report { left: 263px; top: 113px; width: 392px; height: 540px; background: radial-gradient(ellipse at 74px 24px, #dccb9a 0, transparent 15px), radial-gradient(ellipse at 108px 26px, #cdb878 0, transparent 13px), linear-gradient(90deg, #f4f6f8 0, #eef1f4 108px, #8d97a8 122px, #52617a 140px, #304059 180px, #34445e 280px, #5b6b80 100%) 0 0/100% 28px no-repeat, linear-gradient(90deg, #f1f4f6 20px, transparent 20px), linear-gradient(#4d5d74 0, #4d5d74 28%, #2f3f58 30%, #247382 45%, #34435d 55%, #498694 62%, #51617c 72%, #94a4be 86%, #f2f5f7 88%, #eef1f5 100%); }
.step { left: 707px; top: 318px; width: 473px; height: 320px; background: radial-gradient(ellipse 70px 20px at 56px 15px, #a4b5bf 0, #7c939e 50%, transparent 100%) 0 0/170px 28px no-repeat, linear-gradient(95deg, transparent 348px, #3a8596 356px, #3a8596 360px, transparent 368px) 0 0/100% 28px no-repeat, linear-gradient(90deg, #46567a, #3f6b78 20%, #2f6c76 28%, #33445f 45%, #3c4d68 80%, #64738a) 0 0/100% 28px no-repeat, linear-gradient(#42526b 0, #50607a 50%, #95a5bf 80%, #f1f4f7 84%, #eef1f5 100%); }
.title { height: 28px; display: flex; align-items: flex-start; padding-left: 2px; flex: none; letter-spacing: -.2px; }
.title > svg { margin: 7px 6px 0 0; }
.title > span { margin-top: 6px; }
.close { width: 48px; height: 19px; margin-left: auto; border: 1px solid #b8c2cf; border-top: 0; border-radius: 0 0 4px 4px; box-shadow: 0 0 0 1px #4c5969; display: flex; align-items: center; justify-content: center; background: linear-gradient(#5e6e83, #40506a); }
.client { flex: 1; border: 1px solid #3d4654; box-shadow: 0 0 0 1px #c7d0db; background: linear-gradient(110deg, #fff, #f0f0f0 70%); padding: 7px 4px 0; min-height: 0; }
fieldset { margin: 0; border: 1px solid #d1dde7; border-radius: 3px; padding: 0; min-width: 0; }
legend { line-height: 14px; padding: 0 3px; margin-left: 8px; }
.btn { font: inherit; letter-spacing: inherit; height: 21px; padding: 0; border: 1px solid #707070; border-radius: 3px; background: linear-gradient(#f4f4f4 48%, #dedede 50%, #d2d2d2); box-shadow: inset 0 0 0 1px #f8f8f8; color: #000; white-space: nowrap; }
.stepbox { height: 73px; width: 368px; }
.line { height: 23px; padding-left: 7px; line-height: 31px; }
.line.frame { display: flex; align-items: center; padding-top: 5px; line-height: 16px; height: 30px; }
.frame > span { padding-bottom: 2px; }
.frame span:first-child { width: 43px; } .frame span:nth-child(2) { width: 15px; }
.b76 { width: 76px; }
.dtabs { display: flex; align-items: flex-end; height: 28px; }
.dtab { width: 45px; height: 21px; border: 1px solid #8b8b95; border-left: 0; border-bottom: 0; padding: 3px 0 0 7px; background: linear-gradient(#eee 50%, #d9d9d9 50%); }
.dtab.sel { width: 61px; height: 24px; margin-bottom: -1px; border-left: 1px solid #8b8b95; background: #fff; padding: 4px 0 0 8px; position: relative; z-index: 1; }
.dpanel { width: 366px; height: 358px; border: 1px solid #8b8b95; background: #fff; padding: 8px 3px 0 5px; }
.outbox { height: 343px; }
.posrow { display: flex; align-items: center; height: 25px; margin-top: 6px; padding-left: 7px; }
.posrow > span { width: 50px; }
.pos { width: 130px; }
.hint { padding-left: 7px; height: 27px; line-height: 28px; letter-spacing: -.32px; }
.list { display: flex; width: 344px; height: 212px; margin-left: 5px; border: 1px solid #a6a6ae; overflow: hidden; }
.checks { flex: 1; padding-left: 53px; letter-spacing: -.25px; }
.checks label { display: flex; align-items: center; height: 19px; }
.checks label:first-child { height: 15px; line-height: 12px; padding-bottom: 4px; }
.checks i { width: 13px; height: 13px; margin-right: 4px; border: 1px solid #858585; box-shadow: inset 0 0 0 1px #f5f5f5, inset 0 0 0 2px #bbb; background: linear-gradient(135deg, #ccc, #fff); }
.listbar { padding: 8px 0; margin: 1px 1px 1px 0; }
.listbar .thumb { height: 101px; margin-top: 78px; }
.edit { display: flex; align-items: center; margin: 4px 0 0 7px; }
.edit span { width: 27px; }
.input { width: 315px; height: 23px; border: 1px solid #a6a6ae; padding: 3px; background: #fff; }
.sect { display: flex; align-items: center; margin: 5px 0 0 7px; color: #a2a2a2; letter-spacing: -.2px; }
.sect .sp { width: 81px; color: #000; }
.sect i { width: 12px; height: 12px; border: 1px solid #ccc; border-radius: 50%; background: #eee; margin-right: 5px; }
.sect .all { width: 22px; } .sect .sel { width: 38px; }
.dis { color: #a2a2a2; border-color: #aaa; background: #f4f4f4; width: 57px; }
.dbtns { display: flex; gap: 32px; padding: 10px 0 0 14px; }
.dbtns .btn { width: 61px; }

.step .client { padding: 4px 4px 0; }
.table { width: 449px; height: 104px; border: 1px solid #a6a6ae; background: #fff; padding: 1px; }
.steps { display: flex; }
.trows { width: 429px; }
.th { display: flex; align-items: center; height: 20px; font-weight: bold; padding-left: 4px; background: linear-gradient(#fff 45%, #f1f2f4 50%); border-bottom: 1px solid #ddd; }
.th span + span { border-left: 1px solid #ddd; padding-left: 4px; margin-left: -5px; line-height: 19px; }
.c185 { width: 185px; } .c60 { width: 60px; }
.tr { height: 20px; line-height: 20px; padding-left: 4px; }
.selrow { background: #39f; color: #fff; }
.hbar { display: flex; align-items: center; height: 16px; margin-top: 3px; padding: 0 6px 0 7px; background: #efefef; }
.hbar .lt { border-right-color: #444; border-right-width: 3px; border-left: 0; }
.hbar .rt { border-left-color: #444; border-left-width: 3px; border-right: 0; margin-left: auto; }
.hthumb { width: 376px; height: 15px; margin-left: 8px; border: 1px solid #999; border-radius: 2px; background: linear-gradient(#555, #555) calc(50% - 3px) 4px/1px 6px no-repeat, linear-gradient(#555, #555) 50% 4px/1px 6px no-repeat, linear-gradient(#555, #555) calc(50% + 3px) 4px/1px 6px no-repeat, linear-gradient(#f5f5f5, #ddd 50%, #c9c9cc); }
.stepbar { height: 83px; padding: 7px 0; }
.stepbar .thumb { height: 27px; margin-top: 9px; }
.flabel { height: 35px; padding: 14px 0 0 2px; font-weight: bold; }
.cols { display: grid; grid-template-columns: 60px 71px 89px auto; }
.sbtns { display: flex; gap: 20px; padding: 9px 0 0 8px; }
.sbtns .btn { width: 93px; }
```
